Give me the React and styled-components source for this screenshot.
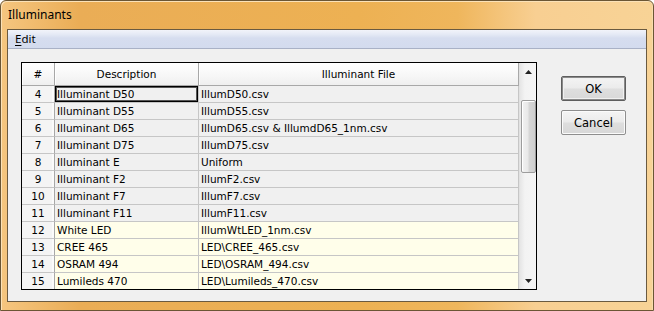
import React from "react";
import styled, { createGlobalStyle } from "styled-components";

const GlobalStyle = createGlobalStyle`
  html, body {
    margin: 0;
    padding: 0;
    background: #ffffff;
  }
  * {
    box-sizing: border-box;
  }
`

const Window = styled.div`
  width: 654px;
  height: 311px;
  display: flex;
  flex-direction: column;
  border: 1px solid #6b5634;
  border-radius: 6px 6px 0 0;
  background: linear-gradient(90deg, #f5c680 0%, #eaad56 12%, #edb153 55%, #efb65c 70%, #f8cf92 82%, #f8d396 100%);
  box-shadow: inset 1px 1px 0 #fbe2b8, inset -1px 0 0 #f9dcae;
  font-family: "DejaVu Sans", Verdana, sans-serif;
`

const TitleBar = styled.div`
  height: 28px;
  flex: none;
  display: flex;
  align-items: center;
  padding: 0 0 2px 7px;
  font-family: "Noto Sans", "Segoe UI", sans-serif;
  font-size: 12px;
  color: #000;
`

const Client = styled.div`
  flex: none;
  height: 273px;
  margin: 0 6px;
  display: flex;
  flex-direction: column;
  border: 1px solid #6a5a40;
  background: #f0f0f0;
`

const MenuBar = styled.div`
  height: 19px;
  flex: none;
  display: flex;
  align-items: center;
  padding: 0 0 1px 7px;
  background: linear-gradient(180deg, #f2f4fa 0%, #e4e9f5 25%, #d6ddef 45%, #d3dbee 100%);
  border-bottom: 1px solid #a9b1c6;
  font-family: "Noto Sans", "Segoe UI", sans-serif;
  font-size: 11.5px;
  color: #000;

  & u {
    text-decoration: underline;
    text-underline-offset: 2px;
  }
`

const Body = styled.div`
  flex: 1;
  display: flex;
  align-items: flex-start;
  padding: 13px 0 0 13px;
  gap: 24px;
`

const GridFrame = styled.div`
  width: 516px;
  height: 228px;
  border: 1px solid #000;
  display: flex;
  background: #f0f0f0;
`

const GridBody = styled.div`
  width: 497px;
  height: 226px;
  overflow: hidden;
`

const Row = styled.div`
  display: grid;
  grid-template-columns: 33px 144px 320px;
  height: ${p => (p.$header ? 23 : 17)}px;
  background: ${p => (p.$header ? "linear-gradient(180deg, #ffffff 0%, #f7f7f7 55%, #eeeeee 100%)" : p.$led ? "#fffeea" : "#f0f0f0")};
`

const HeadCell = styled.div`
  display: flex;
  align-items: center;
  justify-content: center;
  border-right: 1px solid #a8a8a8;
  border-bottom: 1px solid #a8a8a8;
  box-shadow: inset 1px 1px 0 #ffffff;
  font-size: 10.5px;
  color: #000;
`

const NumCell = styled.div`
  display: flex;
  align-items: center;
  justify-content: center;
  border-right: 1px solid #a8a8a8;
  border-bottom: 1px solid #c6c6c6;
  background: #f4f4f4;
  box-shadow: inset -2px 0 0 #fbfbfb;
  font-size: 10.5px;
  color: #000;
`

const Cell = styled.div`
  display: flex;
  align-items: center;
  padding: 0 0 1px 2px;
  border-right: 1px solid #c6c6c6;
  border-bottom: 1px solid #c6c6c6;
  font-size: 10.5px;
  color: #000;
  white-space: nowrap;
  overflow: hidden;
  box-shadow: ${p => (p.$focus ? "inset 0 0 0 1px #000, inset 0 0 0 2px #555" : "none")};
`

const ScrollBar = styled.div`
  width: 17px;
  height: 226px;
  display: flex;
  flex-direction: column;
  align-items: center;
  background: linear-gradient(90deg, #e6e6e6 0%, #f3f3f3 30%, #f5f5f5 100%);
  border-left: 1px solid #e2e2e2;
`

const Arrow = styled.div`
  height: 17px;
  flex: none;
  display: flex;
  align-items: center;
  justify-content: center;
`

const Track = styled.div`
  flex: 1;
  width: 100%;
  display: flex;
  flex-direction: column;
  align-items: center;
  padding-top: 20px;
`

const Thumb = styled.div`
  width: 15px;
  height: 73px;
  border: 1px solid #9c9c9c;
  border-radius: 2px;
  background: linear-gradient(90deg, #f2f2f2 0%, #e8e8e8 45%, #d6d6d6 55%, #cfcfcf 100%);
  box-shadow: inset 1px 1px 0 #ffffff;
`

const Buttons = styled.div`
  display: flex;
  flex-direction: column;
  gap: 9px;
  padding-top: 14px;
`

const Button = styled.button`
  width: 65px;
  height: 25px;
  padding: 0;
  font-family: "DejaVu Sans", Verdana, sans-serif;
  font-size: 11.5px;
  color: #000;
  border-radius: 2px;
  border: 1px solid ${p => (p.$default ? "#5e5e5e" : "#8e8e8e")};
  background: linear-gradient(180deg, #f4f4f4 0%, #ebebeb 48%, #dedede 52%, #d8d8d8 100%);
  box-shadow: ${p => (p.$default ? "inset 0 0 0 1px #8a8a8a, inset 0 0 0 2px #f0f0f0" : "inset 0 0 0 1px #fbfbfb")};
`

const rows = [
  ["4", "Illuminant D50", "IllumD50.csv"],
  ["5", "Illuminant D55", "IllumD55.csv"],
  ["6", "Illuminant D65", "IllumD65.csv & IllumdD65_1nm.csv"],
  ["7", "Illuminant D75", "IllumD75.csv"],
  ["8", "Illuminant E", "Uniform"],
  ["9", "Illuminant F2", "IllumF2.csv"],
  ["10", "Illuminant F7", "IllumF7.csv"],
  ["11", "Illuminant F11", "IllumF11.csv"],
  ["12", "White LED", "IllumWtLED_1nm.csv", true],
  ["13", "CREE 465", "LED\\CREE_465.csv", true],
  ["14", "OSRAM 494", "LED\\OSRAM_494.csv", true],
  ["15", "Lumileds 470", "LED\\Lumileds_470.csv", true],
];

const ArrowIcon = ({ down }) => (
  <svg width="7" height="4" viewBox="0 0 7 4">
    <path d={down ? "M0 0 H7 L3.5 4 Z" : "M3.5 0 L7 4 H0 Z"} fill="#222" />
  </svg>
);

const App = () => (
  <>
    <GlobalStyle />
    <Window>
      <TitleBar>Illuminants</TitleBar>
      <Client>
        <MenuBar>
          <span><u>E</u>dit</span>
        </MenuBar>
        <Body>
          <GridFrame>
            <GridBody>
              <Row $header>
                <HeadCell>#</HeadCell>
                <HeadCell>Description</HeadCell>
                <HeadCell>Illuminant File</HeadCell>
              </Row>
              {rows.map(([num, desc, file, led], i) => (
                <Row key={num} $led={led}>
                  <NumCell>{num}</NumCell>
                  <Cell $focus={i === 0}>{desc}</Cell>
                  <Cell>{file}</Cell>
                </Row>
              ))}
            </GridBody>
            <ScrollBar>
              <Arrow><ArrowIcon /></Arrow>
              <Track><Thumb /></Track>
              <Arrow><ArrowIcon down /></Arrow>
            </ScrollBar>
          </GridFrame>
          <Buttons>
            <Button $default>OK</Button>
            <Button>Cancel</Button>
          </Buttons>
        </Body>
      </Client>
    </Window>
  </>
);

export default App;
